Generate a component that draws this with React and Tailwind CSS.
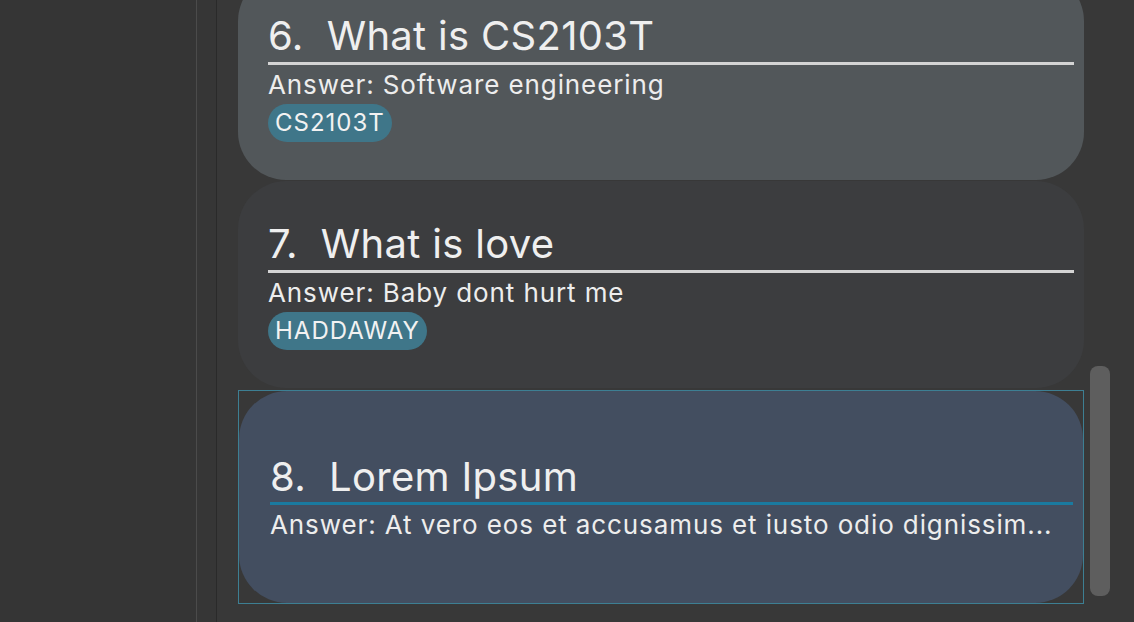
import React from 'react'

const font = { fontFamily: 'Inter, "Noto Sans", sans-serif' }

const cards = [
  { n: 6, q: 'What is CS2103T', a: 'Software engineering', tags: ['CS2103T'], tone: 'bg-[#52575a]' },
  { n: 7, q: 'What is love', a: 'Baby dont hurt me', tags: ['HADDAWAY'], tone: 'bg-[#3c3d3f]' },
]

function Card({ n, q, a, tags, tone }) {
  return (
    <div className={`h-[207px] rounded-[48px] ${tone} pl-[30px] pr-[10px] flex flex-col justify-center`}>
      <div className="border-b-[3px] border-[#d4d4d4] text-[40px] leading-[48px] tracking-[0.3px] text-[#efefef] whitespace-pre pb-[2px]">
        {`${n}.  ${q}`}
      </div>
      <div className="text-[26px] leading-[32px] tracking-[0.9px] text-[#ededed] mt-[4px]">Answer: {a}</div>
      <div className="flex gap-2 mt-[3px]">
        {tags.map(t => (
          <span key={t} className="rounded-full bg-[#3f7689] px-[7px] h-[38px] flex items-center text-[24px] tracking-[1px] text-[#f2f2f2]">
            {t}
          </span>
        ))}
      </div>
    </div>
  )
}

export default function App() {
  return (
    <div className="w-[1134px] h-[622px] flex bg-[#383838] overflow-hidden" style={font}>
      {/* side panel */}
      <div className="w-[196px] bg-[#353535]" />
      <div className="w-px bg-[#4b4b4b]" />
      <div className="w-[19px] bg-[#363636]" />
      <div className="w-px bg-[#2a2a2a]" />

      {/* list */}
      <div className="w-[873px] pl-[21px] pr-[6px] overflow-hidden">
        <div className="-mt-[27px] w-[846px]">
          {cards.map(c => (
            <div key={c.n} className="mb-px">
              <Card {...c} />
            </div>
          ))}
          <div className="mt-[2px] h-[214px] border border-[#3d7f93]">
            <div className="h-full rounded-[48px] bg-[#434e60] pl-[31px] pr-[10px] flex flex-col justify-center">
              <div className="border-b-[3px] border-[#1a7aa0] text-[40px] leading-[48px] tracking-[0.3px] text-[#efefef] whitespace-pre pb-[1px]">
                8.  Lorem Ipsum
              </div>
              <div className="text-[26px] leading-[32px] tracking-[0.9px] text-[#ededed] mt-[4px]">
                Answer: At vero eos et accusamus et iusto odio dignissim...
              </div>
            </div>
          </div>
        </div>
      </div>

      {/* scrollbar */}
      <div className="w-[44px] pt-[366px] pb-[26px]">
        <div className="w-[20px] h-full rounded-[8px] bg-[#5e5e5e]" />
      </div>
    </div>
  )
}
